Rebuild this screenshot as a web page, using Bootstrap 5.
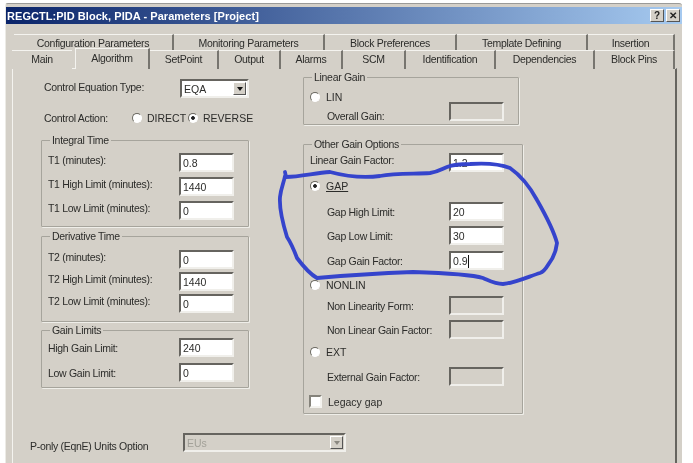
<!DOCTYPE html>
<html lang="en">
<head>
    <meta charset="UTF-8">
    <meta name="viewport" content="width=device-width, initial-scale=1.0">
    <title>REGCTL:PID Block, PIDA - Parameters [Project]</title>
    <link href="https://cdn.jsdelivr.net/npm/bootstrap@5.3.3/dist/css/bootstrap.min.css" rel="stylesheet">
    <style>
        html, body { height: 463px; overflow: hidden; background: #fff; }
        body { font-family: "Liberation Sans", Arial, sans-serif; font-size: 10.5px; color: #2c2c2a; line-height: 14px; letter-spacing: -.3px; }

        .dlg-stage { position: relative; width: 693px; height: 463px; overflow: hidden; filter: blur(.65px); }
        .dlg-window { margin: 3px 0 0 5px; width: 677px; height: 460px; background: #d4d0c8; border-top: 1px solid #9a9a98; border-left: 1px solid #ecebe6; border-radius: 3px 3px 0 0; padding-top: 3px; }

        /* title bar */
        .dlg-title { height: 17px; padding: 0 2px 0 1px; background: linear-gradient(90deg, #0a246a, #a6caf0); color: #fff; font-weight: 700; font-size: 11px; letter-spacing: .05px; }
        .dlg-capbtn { width: 14px; height: 13px; background: #d4d0c8; color: #222; font-size: 10px; line-height: 12px; text-align: center; border: 1px solid; border-color: #fff #555 #555 #fff; margin-left: 2px; }

        /* tabs */
        .dlg-tabs-top, .dlg-tabs-bottom { display: grid; position: relative; }
        .dlg-tabs-top { height: 16px; margin: 10px 0 0 8px; grid-template-columns: 160px 151px 132px 131px 87px; }
        .dlg-tabs-bottom { margin-left: 6px; height: 18px; grid-template-columns: 60px 78px 69px 62px 62px 63px 90px 99px 80px; }
        .dlg-tab.nav-link { display: block; height: 100%; padding: 1px 0 0; text-align: center; color: #2c2c2a; background: #d4d0c8; border-top: 1px solid #f4f3ef; border-right: 2px solid #77756f; font-size: 10.5px; line-height: 14px; }
        .dlg-tab.nav-link.active { position: relative; z-index: 2; height: 21px; margin: -2px 0 0 3px; padding-top: 2px; border-left: 1px solid #f4f3ef; }
        .dlg-tabs-bottom li:first-child .dlg-tab { border-right: 0; }

        /* panel */
        .dlg-panel { margin-left: 6px; width: 665px; height: 400px; border-top: 1px solid #f4f3ef; border-left: 1px solid #f4f3ef; border-right: 2px solid #66645f; padding: 2px 0 0 28px; }
        .dlg-left { width: 208px; }
        .dlg-right { width: 220px; margin: -1px 0 0 54px; }

        /* group boxes */
        .dlg-group { border: 1px solid #a6a49c; box-shadow: 1px 1px 0 #efeee9; padding: 0 14px 6px 6px; border-radius: 1px; }
        .dlg-group legend { float: none; width: auto; margin: 0 0 0 2px; padding: 0 2px; font-size: 10.5px; line-height: 14px; }
        .dlg-stack { display: flex; flex-direction: column; gap: 5px; }
        .dlg-row { display: flex; align-items: center; justify-content: space-between; height: 19px; }
        .dlg-raised label { margin-bottom: 5px; }

        .dlg-integral { margin-top: 6px; padding-bottom: 6px; }
        .dlg-integral .dlg-stack { padding-top: 6px; }
        .dlg-derivative { margin-top: 2px; padding-bottom: 8px; }
        .dlg-derivative .dlg-stack { padding-top: 7px; gap: 3px; }
        .dlg-limits { margin-top: 1px; padding-bottom: 5px; }
        .dlg-limits .dlg-stack { padding-top: 1px; gap: 6px; }

        .dlg-lin { width: 216px; padding-bottom: 3px; }
        .dlg-lin .dlg-choice { margin-top: 3px; }
        .dlg-other { margin-top: 12px; padding-bottom: 2px; padding-right: 18px; }
        .dlg-other .dlg-stack { padding-top: 2px; }
        .dlg-indent { padding-left: 17px; }
        .dlg-choice { display: flex; align-items: center; gap: 6px; height: 19px; letter-spacing: 0; }
        .dlg-t1 { margin-top: -1px; }
        .dlg-t2 { margin-top: -3px; }
        .dlg-t3 { margin-top: -2px; }
        .dlg-t4 { margin-top: -4px; }
        .dlg-t6 { margin-top: 1px; }
        .dlg-t7 { margin-top: 2px; }

        /* win32 looking fields */
        .dlg-field { flex: none; width: 55px; height: 19px; padding: 2px 0 0 2px; background: #fff; border: 2px solid; border-color: #66645f #f0efeb #f0efeb #66645f; font-size: 10.5px; line-height: 13px; letter-spacing: 0; color: #2c2c2a; overflow: hidden; }
        .dlg-field.is-off { background: #d4d0c8; }
        .dlg-caret { display: inline-block; width: 1px; height: 13px; background: #111; vertical-align: top; }
        .dlg-combo { display: flex; justify-content: space-between; flex: none; height: 19px; padding: 1px 1px 1px 2px; background: #fff; border: 2px solid; border-color: #66645f #f0efeb #f0efeb #66645f; line-height: 14px; letter-spacing: 0; }
        .dlg-combo-eqa { width: 69px; }
        .dlg-combo-eus { width: 163px; background: #d4d0c8; color: #a3a199; }
        .dlg-arrow { display: flex; align-items: center; justify-content: center; width: 13px; background: #d4d0c8; border: 1px solid; border-color: #fff #555 #555 #fff; }
        .dlg-arrow::after { content: ""; border: 3.5px solid transparent; border-top: 4px solid #111; border-bottom: 0; }
        .dlg-combo-eus .dlg-arrow::after { border-top-color: #8a8880; }

        .dlg-radio, .dlg-check { appearance: none; flex: none; margin: 0; background: #fff; border: 1px solid; border-color: #6a6860 #fff #fff #6a6860; }
        .dlg-radio { width: 10px; height: 10px; border-radius: 50%; }
        .dlg-radio:checked { background: radial-gradient(circle, #222 0 1.5px, #fff 2.2px); }
        .dlg-check { width: 13px; height: 13px; border-width: 2px; border-color: #85837b #f4f3ef #f4f3ef #85837b; margin-left: -1px; }

        .dlg-control { margin: 8px 0 0 3px; }
        .dlg-control label { flex: none; width: 136px; margin-bottom: 3px; }
        .dlg-action { height: 19px; margin: 10px 0 0 3px; }
        .dlg-action label { flex: none; width: 88px; }
        .dlg-opt { display: flex; align-items: center; gap: 5px; letter-spacing: 0; }
        .dlg-opt:first-of-type { width: 56px; flex: none; }

        .dlg-bottom { margin: 19px 0 0 -11px; }
        .dlg-bottom label { flex: none; width: 153px; padding-top: 6px; }

        .dlg-ink { position: absolute; left: 0; top: 0; pointer-events: none; }
    </style>
</head>
<body>
<div class="dlg-stage">
    <div class="dlg-window">
        <!-- title bar -->
        <div class="dlg-title d-flex align-items-center justify-content-between">
            <span>REGCTL:PID Block, PIDA - Parameters [Project]</span>
            <span class="d-flex">
                <span class="dlg-capbtn">?</span>
                <span class="dlg-capbtn">✕</span>
            </span>
        </div>

        <!-- tabs -->
        <ul class="nav dlg-tabs-top">
            <li class="nav-item"><a class="nav-link dlg-tab" href="#">Configuration Parameters</a></li>
            <li class="nav-item"><a class="nav-link dlg-tab" href="#">Monitoring Parameters</a></li>
            <li class="nav-item"><a class="nav-link dlg-tab" href="#">Block Preferences</a></li>
            <li class="nav-item"><a class="nav-link dlg-tab" href="#">Template Defining</a></li>
            <li class="nav-item"><a class="nav-link dlg-tab" href="#">Insertion</a></li>
        </ul>
        <ul class="nav dlg-tabs-bottom">
            <li class="nav-item"><a class="nav-link dlg-tab" href="#">Main</a></li>
            <li class="nav-item"><a class="nav-link dlg-tab active" href="#">Algorithm</a></li>
            <li class="nav-item"><a class="nav-link dlg-tab" href="#">SetPoint</a></li>
            <li class="nav-item"><a class="nav-link dlg-tab" href="#">Output</a></li>
            <li class="nav-item"><a class="nav-link dlg-tab" href="#">Alarms</a></li>
            <li class="nav-item"><a class="nav-link dlg-tab" href="#">SCM</a></li>
            <li class="nav-item"><a class="nav-link dlg-tab" href="#">Identification</a></li>
            <li class="nav-item"><a class="nav-link dlg-tab" href="#">Dependencies</a></li>
            <li class="nav-item"><a class="nav-link dlg-tab" href="#">Block Pins</a></li>
        </ul>

        <div class="dlg-panel">
            <div class="d-flex">
                <!-- left column -->
                <div class="dlg-left">
                    <div class="dlg-control d-flex align-items-center">
                        <label>Control Equation Type:</label>
                        <div class="dlg-combo dlg-combo-eqa"><span>EQA</span><span class="dlg-arrow"></span></div>
                    </div>
                    <div class="dlg-action d-flex align-items-center">
                        <label>Control Action:</label>
                        <span class="dlg-opt"><input class="dlg-radio" type="radio" name="act"> DIRECT</span>
                        <span class="dlg-opt"><input class="dlg-radio" type="radio" name="act" checked> REVERSE</span>
                    </div>

                    <fieldset class="dlg-group dlg-integral">
                        <legend>Integral Time</legend>
                        <div class="dlg-stack dlg-raised">
                            <div class="dlg-row"><label>T1 (minutes):</label><div class="dlg-field">0.8</div></div>
                            <div class="dlg-row"><label>T1 High Limit (minutes):</label><div class="dlg-field">1440</div></div>
                            <div class="dlg-row"><label>T1 Low Limit (minutes):</label><div class="dlg-field">0</div></div>
                        </div>
                    </fieldset>
                    <fieldset class="dlg-group dlg-derivative">
                        <legend>Derivative Time</legend>
                        <div class="dlg-stack dlg-raised">
                            <div class="dlg-row"><label>T2 (minutes):</label><div class="dlg-field">0</div></div>
                            <div class="dlg-row"><label>T2 High Limit (minutes):</label><div class="dlg-field">1440</div></div>
                            <div class="dlg-row"><label>T2 Low Limit (minutes):</label><div class="dlg-field">0</div></div>
                        </div>
                    </fieldset>
                    <fieldset class="dlg-group dlg-limits">
                        <legend>Gain Limits</legend>
                        <div class="dlg-stack">
                            <div class="dlg-row"><label>High Gain Limit:</label><div class="dlg-field">240</div></div>
                            <div class="dlg-row"><label>Low Gain Limit:</label><div class="dlg-field">0</div></div>
                        </div>
                    </fieldset>
                </div>

                <!-- right column -->
                <div class="dlg-right">
                    <fieldset class="dlg-group dlg-lin">
                        <legend>Linear Gain</legend>
                        <div class="dlg-choice"><input class="dlg-radio" type="radio" name="gain"> LIN</div>
                        <div class="dlg-row dlg-indent dlg-t4"><label class="pt-2">Overall Gain:</label><div class="dlg-field is-off"></div></div>
                    </fieldset>
                    <fieldset class="dlg-group dlg-other">
                        <legend>Other Gain Options</legend>
                        <div class="dlg-stack">
                            <div class="dlg-row dlg-raised"><label>Linear Gain Factor:</label><div class="dlg-field">1.2</div></div>
                            <div class="dlg-choice dlg-t1"><input class="dlg-radio" type="radio" name="gain" checked> <u>GAP</u></div>
                            <div class="dlg-row dlg-indent dlg-t7"><label>Gap High Limit:</label><div class="dlg-field">20</div></div>
                            <div class="dlg-row dlg-indent"><label>Gap Low Limit:</label><div class="dlg-field">30</div></div>
                            <div class="dlg-row dlg-indent dlg-t6"><label>Gap Gain Factor:</label><div class="dlg-field">0.9<span class="dlg-caret"></span></div></div>
                            <div class="dlg-choice"><input class="dlg-radio" type="radio" name="gain"> NONLIN</div>
                            <div class="dlg-row dlg-indent dlg-t2"><label>Non Linearity Form:</label><div class="dlg-field is-off"></div></div>
                            <div class="dlg-row dlg-indent"><label>Non Linear Gain Factor:</label><div class="dlg-field is-off"></div></div>
                            <div class="dlg-choice dlg-t3"><input class="dlg-radio" type="radio" name="gain"> EXT</div>
                            <div class="dlg-row dlg-indent dlg-t6"><label>External Gain Factor:</label><div class="dlg-field is-off"></div></div>
                            <div class="dlg-choice dlg-t6"><input class="dlg-check" type="checkbox"> Legacy gap</div>
                        </div>
                    </fieldset>
                </div>
            </div>

            <div class="dlg-bottom d-flex">
                <label>P-only (EqnE) Units Option</label>
                <div class="dlg-combo dlg-combo-eus"><span>EUs</span><span class="dlg-arrow"></span></div>
            </div>
        </div>
    </div>

    <!-- hand drawn marker around the GAP settings -->
    <svg class="dlg-ink" width="693" height="463" viewBox="0 0 693 463" fill="none">
        <path d="M285 172 L286 177 C300 177 315 173 330 172 C345 176 365 178 380 176 C395 173 415 174 430 173 C438 172 442 169 447 167 C455 164 462 164 470 164 C485 163 500 164 510 168 C520 175 530 187 537 200 C545 214 553 228 557 243 C556 252 552 260 548 265 C545 270 543 272 540 273 C530 276 515 283 503 284 C495 284 490 281 483 278 C470 274 445 273 413 272 C385 273 350 275 317 278 C310 274 303 266 297 258 C294 250 291 243 287 237 C283 224 279 210 280 197 C281 188 284 182 285 176" stroke="#3544cc" stroke-width="3.8" stroke-linecap="round" stroke-linejoin="round"/>
    </svg>
</div>
<script src="https://cdn.jsdelivr.net/npm/bootstrap@5.3.3/dist/js/bootstrap.bundle.min.js"></script>
</body>
</html>
